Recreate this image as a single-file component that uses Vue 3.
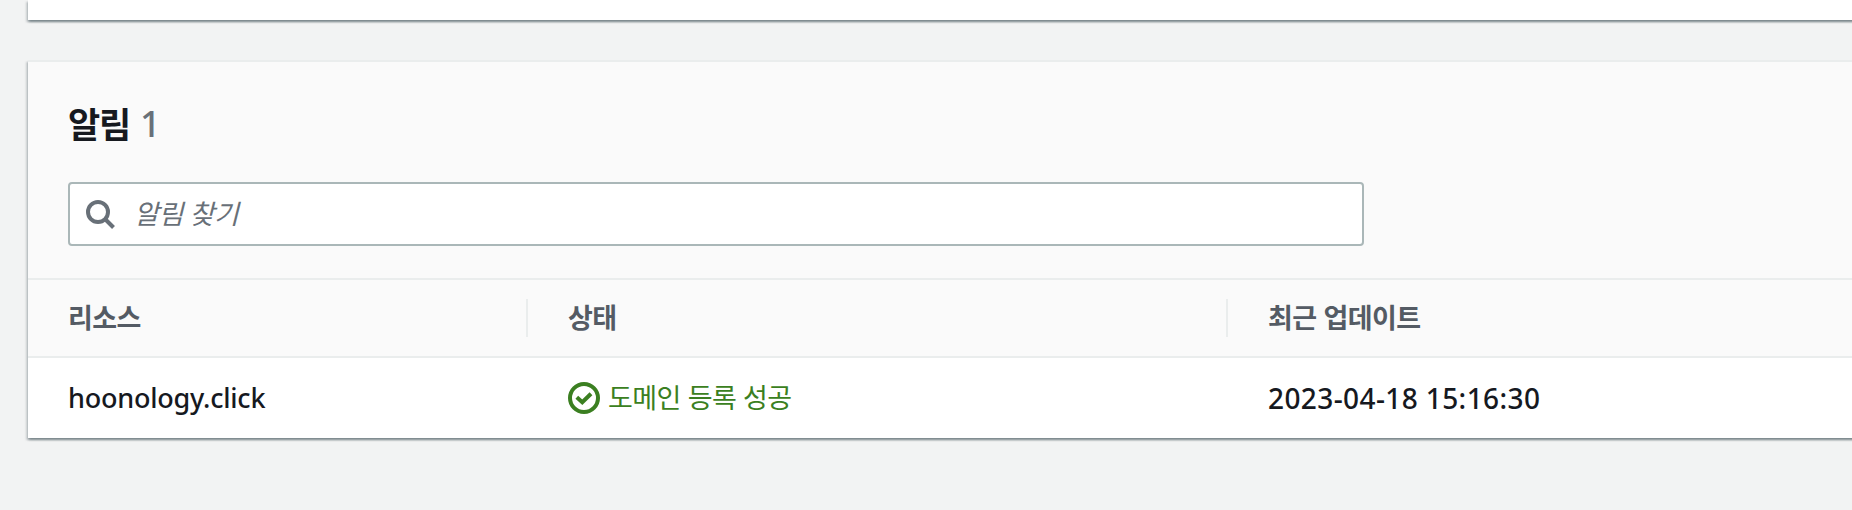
<script setup>
const columns = ['리소스', '상태', '최근 업데이트']
const rows = [
  { resource: 'hoonology.click', status: '도메인 등록 성공', updated: '2023-04-18 15:16:30' },
]
</script>

<template>
  <main class="page">
    <section class="panel previous"></section>
    <section class="panel">
      <header class="head">
        <h2 class="title"><span class="name">알림</span><span class="count">{{ rows.length }}</span></h2>
        <label class="search">
          <svg class="search-icon" viewBox="0 0 32 32">
            <circle cx="14" cy="14" r="10" />
            <path d="M21 21 L29.5 29.5" />
          </svg>
          <span class="placeholder">알림 찾기</span>
        </label>
      </header>
      <div class="row labels">
        <div v-for="c in columns" :key="c" class="cell"><span class="label">{{ c }}</span></div>
      </div>
      <div v-for="r in rows" :key="r.resource" class="row data">
        <div class="cell"><span class="resource">{{ r.resource }}</span></div>
        <div class="cell status">
          <svg class="check" viewBox="0 0 32 32">
            <circle cx="16" cy="16" r="14" />
            <path d="M8.8 15.2 L14.3 20.3 L23 11.8" />
          </svg>
          <span class="status-text">{{ r.status }}</span>
        </div>
        <div class="cell"><span class="date">{{ r.updated }}</span></div>
      </div>
    </section>
  </main>
</template>

<style>
body { background: #f2f3f3; overflow: hidden; }
</style>

<style scoped>
.page {
  box-sizing: border-box;
  height: 510px;
  padding-left: 28px;
  overflow: hidden;
  background: #f2f3f3;
  color: #16191f;
  font-family: "Noto Sans", "Noto Sans CJK KR", sans-serif;
  font-size: 26px;
}
.panel {
  width: 1900px;
  background: #fff;
  border-top: 2px solid #eaeded;
  box-shadow: 0 2px 2px 0 rgba(0, 28, 36, .3), 2px 2px 2px 0 rgba(0, 28, 36, .15), -2px 2px 2px 0 rgba(0, 28, 36, .15);
}
.previous { height: 20px; border-top: 0; margin-bottom: 40px; }
.head {
  box-sizing: border-box;
  height: 218px;
  padding: 37px 40px 0;
  background: #fafafa;
  border-bottom: 2px solid #eaeded;
}
.title {
  display: flex;
  gap: 10px;
  height: 48px;
  margin: 0 0 35px;
  line-height: 48px;
  font-size: 36px;
}
.name { font-family: "Noto Sans CJK KR", sans-serif; font-size: 35px; font-weight: 700; letter-spacing: -1.2px; }
.count { padding-top: 1px; font-weight: 500; color: #687078; }
.search {
  box-sizing: border-box;
  display: flex;
  align-items: center;
  width: 1296px;
  height: 64px;
  padding-left: 14px;
  background: #fff;
  border: 2px solid #aab7b8;
  border-radius: 4px;
}
.search-icon { width: 32px; height: 32px; fill: none; stroke: #687078; stroke-width: 4; }
.placeholder {
  margin-left: 18px;
  padding-bottom: 3px;
  color: #687078;
  font-family: "Noto Sans CJK KR", sans-serif;
  font-size: 27px;
  font-style: italic;
  letter-spacing: -.4px;
  word-spacing: 1px;
}
.row { display: grid; grid-template-columns: 500px 700px 1fr; }
.labels {
  box-sizing: border-box;
  height: 78px;
  align-items: center;
  background: #fafafa;
  border-bottom: 2px solid #eaeded;
  color: #545b64;
  font-family: "Noto Sans CJK KR", sans-serif;
  font-weight: 700;
}
.cell { box-sizing: border-box; display: flex; align-items: center; padding-left: 40px; white-space: nowrap; }
.labels .cell { height: 38px; border-right: 2px solid #eaeded; }
.label { padding-bottom: 3px; font-size: 27px; letter-spacing: -.6px; word-spacing: 1.5px; }
.data { height: 80px; }
.status { color: #3b7f21; }
.check { width: 32px; height: 32px; margin-right: 8px; fill: none; stroke: #3b7f21; stroke-width: 4; }
.status-text {
  padding-bottom: 3px;
  font-family: "Noto Sans CJK KR", sans-serif;
  font-size: 27px;
  letter-spacing: -.6px;
  word-spacing: 1.5px;
}
.resource, .date { padding-bottom: 1px; font-weight: 500; }
.resource { font-size: 27px; letter-spacing: -.22px; }
.date { font-size: 28px; letter-spacing: .4px; }
</style>
